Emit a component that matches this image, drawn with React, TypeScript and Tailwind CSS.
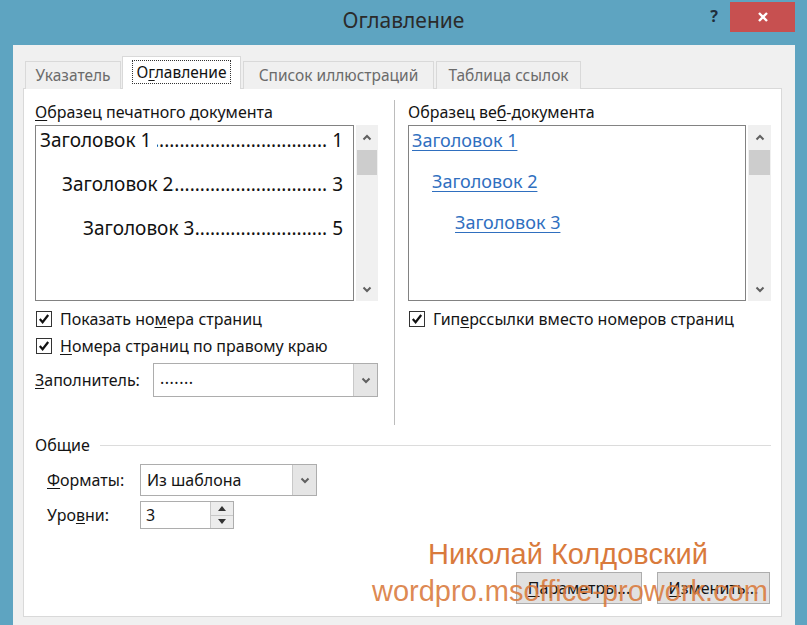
import React from 'react'

const ui = "font-['Segoe_UI','Noto_Sans',sans-serif]"

function ChevronUp() {
  return (
    <svg width="10" height="7" viewBox="0 0 10 7">
      <path d="M1.5 5.5 L5 2 L8.5 5.5" fill="none" stroke="#606060" strokeWidth="2" />
    </svg>
  )
}

function ChevronDown() {
  return (
    <svg width="10" height="7" viewBox="0 0 10 7">
      <path d="M1.5 1.5 L5 5 L8.5 1.5" fill="none" stroke="#606060" strokeWidth="2" />
    </svg>
  )
}

function Check() {
  return (
    <div className="w-[16px] h-[16px] border border-[#333] bg-white flex items-center justify-center shrink-0">
      <svg width="12" height="12" viewBox="0 0 12 12">
        <path d="M1.8 6 L4.6 9.2 L10.2 2" fill="none" stroke="#111" strokeWidth="2.2" />
      </svg>
    </div>
  )
}

function ScrollBar() {
  return (
    <div className="w-[23px] ml-[2px] bg-[#f0f0f0] flex flex-col">
      <div className="h-[25px] flex items-center justify-center">
        <ChevronUp />
      </div>
      <div className="h-[25px] mx-[1px] bg-[#cdcdcd]" />
      <div className="flex-1" />
      <div className="h-[24px] flex items-center justify-center">
        <ChevronDown />
      </div>
    </div>
  )
}

function Leader({ title, page, indent, gap }: { title: string; page: string; indent: string; gap: string }) {
  return (
    <div className={`flex items-baseline h-[44px] pt-[2px] ${indent}`}>
      <span className={`whitespace-nowrap ${gap}`}>{title}</span>
      <span className="flex-1 min-w-0 overflow-hidden flex justify-end">
        <span className="whitespace-nowrap">{'.'.repeat(60)}</span>
      </span>
      <span className="pl-[5px]">{page}</span>
    </div>
  )
}

function DropButton({ w }: { w: string }) {
  return (
    <div className={`${w} self-stretch bg-[#e5e5e5] border-l border-[#c8c8c8] flex items-center justify-center`}>
      <ChevronDown />
    </div>
  )
}

export default function App() {
  return (
    <div className={`relative w-[807px] h-[625px] bg-[#5ea4c1] flex flex-col overflow-hidden ${ui}`}>
      {/* title bar */}
      <div className="h-[45px] flex items-start shrink-0">
        <div className="flex-1" />
        <div className="pt-[6px] text-[21px] text-[#2b2b2b] leading-[28px]">Оглавление</div>
        <div className="flex-1 flex justify-end items-start">
          <div className="mt-[6px] mr-[12px] text-[16px] font-bold text-[#1f2e3c] leading-[20px]">?</div>
          <div className="mt-[2px] mr-[12px] w-[65px] h-[30px] bg-[#c75050] flex items-center justify-center">
            <svg width="12" height="12" viewBox="0 0 12 12">
              <path d="M2 2 L10 10 M10 2 L2 10" stroke="#fff" strokeWidth="2.4" />
            </svg>
          </div>
        </div>
      </div>

      {/* client */}
      <div className="ml-[13px] mr-[12px] flex-1 bg-[#f0f0f0] pt-[11px] pl-[10px] pr-[13px] flex flex-col">
        {/* tabs */}
        <div className="h-[33px] flex items-end pl-[2px] text-[15.5px] relative z-10 -mb-px">
          <div className="w-[96px] h-[28px] mr-px border border-b-0 border-[#d9d9d9] bg-[#f0f0f0] text-[#6b6b6b] flex items-center justify-center">
            Указатель
          </div>
          <div className="w-[119px] h-[33px] border border-b-0 border-[#d9d9d9] bg-white text-[#111] flex items-center justify-center pb-[2px]">
            <span className="border border-dotted border-[#333] px-[4px] leading-[22px]">
              О<span className="underline underline-offset-2">г</span>лавление
            </span>
          </div>
          <div className="w-[191px] h-[28px] ml-[2px] mr-px border border-b-0 border-[#d9d9d9] bg-[#f0f0f0] text-[#6b6b6b] flex items-center justify-center">
            Список иллюстраций
          </div>
          <div className="w-[145px] h-[28px] ml-px border border-b-0 border-[#d9d9d9] bg-[#f0f0f0] text-[#6b6b6b] flex items-center justify-center">
            Таблица ссылок
          </div>
        </div>

        {/* panel */}
        <div className="h-[529px] bg-white border border-[#d9d9d9] flex flex-col text-[16px] text-[#141414]">
          <div className="h-[336px] flex pl-[11px] pr-[10px] pt-[14px]">
            {/* left column */}
            <div className="w-[343px] shrink-0 flex flex-col">
              <div className="h-[18px] leading-[18px] mb-[4px] whitespace-nowrap">
                <span className="underline underline-offset-2">О</span>бразец печатного документа
              </div>
              <div className="h-[176px] flex">
                <div className="w-[319px] border border-[#828282] pl-[4px] pr-[10px] text-[19px] leading-[24px] text-[#111]">
                  <Leader title="Заголовок 1" page="1" indent="" gap="pr-[6px]" />
                  <Leader title="Заголовок 2" page="3" indent="pl-[22px]" gap="" />
                  <Leader title="Заголовок 3" page="5" indent="pl-[43px]" gap="" />
                </div>
                <ScrollBar />
              </div>
              <div className="mt-[9px] h-[18px] flex items-center pl-px">
                <Check />
                <span className="ml-[8px] whitespace-nowrap">
                  Показать но<span className="underline underline-offset-2">м</span>ера страниц
                </span>
              </div>
              <div className="mt-[9px] h-[18px] flex items-center pl-px">
                <Check />
                <span className="ml-[8px] whitespace-nowrap">
                  <span className="underline underline-offset-2">Н</span>омера страниц по правому краю
                </span>
              </div>
              <div className="mt-[8px] h-[34px] flex items-center">
                <span className="w-[118px] whitespace-nowrap">
                  <span className="underline underline-offset-2">З</span>аполнитель:
                </span>
                <div className="w-[225px] h-[34px] border border-[#adadad] bg-white flex items-center">
                  <span className="flex-1 pl-[6px] pb-[4px] tracking-[0.5px]">.......</span>
                  <DropButton w="w-[24px]" />
                </div>
              </div>
            </div>

            {/* divider */}
            <div className="ml-[16px] mr-[13px] w-px shrink-0 bg-[#bcbcbc] -mt-[3px]" />

            {/* right column */}
            <div className="w-[363px] shrink-0 flex flex-col">
              <div className="h-[18px] leading-[18px] mb-[4px] whitespace-nowrap">
                Образец ве<span className="underline underline-offset-2">б</span>-документа
              </div>
              <div className="h-[176px] flex">
                <div className="w-[339px] border border-[#828282] pl-[3px] text-[18px] leading-[22px] text-[#2f6fbf]">
                  <div className="h-[41px] pt-[3px]">
                    <span className="underline underline-offset-[3px]">Заголовок 1</span>
                  </div>
                  <div className="h-[41px] pt-[3px] pl-[20px]">
                    <span className="underline underline-offset-[3px]">Заголовок 2</span>
                  </div>
                  <div className="h-[41px] pt-[3px] pl-[43px]">
                    <span className="underline underline-offset-[3px]">Заголовок 3</span>
                  </div>
                </div>
                <ScrollBar />
              </div>
              <div className="mt-[9px] h-[18px] flex items-center pl-px">
                <Check />
                <span className="ml-[8px] whitespace-nowrap">
                  Гип<span className="underline underline-offset-2">е</span>рссылки вместо номеров страниц
                </span>
              </div>
            </div>
          </div>

          {/* general */}
          <div className="mt-[10px] h-[20px] flex items-center pl-[11px] pr-[10px]">
            <span>Общие</span>
            <div className="flex-1 ml-[10px] h-px bg-[#dcdcdc]" />
          </div>
          <div className="mt-[9px] h-[32px] flex items-center pl-[23px]">
            <span className="w-[93px]">
              <span className="underline underline-offset-2">Ф</span>орматы:
            </span>
            <div className="w-[177px] h-[32px] border border-[#adadad] bg-white flex items-center">
              <span className="flex-1 pl-[6px]">Из шаблона</span>
              <DropButton w="w-[24px]" />
            </div>
          </div>
          <div className="mt-[5px] h-[28px] flex items-center pl-[23px]">
            <span className="w-[93px]">
              Уро<span className="underline underline-offset-2">в</span>ни:
            </span>
            <div className="w-[94px] h-[28px] border border-[#adadad] bg-white flex items-center">
              <span className="flex-1 pl-[5px]">3</span>
              <div className="w-[23px] self-stretch flex flex-col border-l border-[#c8c8c8] bg-[#ececec]">
                <div className="flex-1 flex items-center justify-center border-b border-[#c8c8c8]">
                  <svg width="8" height="5" viewBox="0 0 8 5">
                    <path d="M0 5 L4 0 L8 5 Z" fill="#333" />
                  </svg>
                </div>
                <div className="flex-1 flex items-center justify-center">
                  <svg width="8" height="5" viewBox="0 0 8 5">
                    <path d="M0 0 L4 5 L8 0 Z" fill="#333" />
                  </svg>
                </div>
              </div>
            </div>
          </div>

          {/* buttons */}
          <div className="mt-[43px] flex justify-end pr-[11px] gap-[15px]">
            <div className="w-[126px] h-[32px] bg-[#e1e1e1] border border-[#adadad] flex items-center justify-center">
              <span>
                <span className="underline underline-offset-2">П</span>араметры...
              </span>
            </div>
            <div className="w-[113px] h-[32px] bg-[#e1e1e1] border border-[#adadad] flex items-center justify-center">
              <span>
                <span className="underline underline-offset-2">И</span>зменить...
              </span>
            </div>
          </div>
        </div>
      </div>

      {/* watermark */}
      <div className="absolute left-[428px] top-[540px] font-['Liberation_Sans',Arial,sans-serif] text-[29px] leading-none text-[#d97a3c] whitespace-nowrap pointer-events-none">
        Николай Колдовский
      </div>
      <div className="absolute left-[372px] top-[577px] font-['Liberation_Sans',Arial,sans-serif] text-[29px] leading-none text-[#d97a3c]/90 whitespace-nowrap pointer-events-none">
        wordpro.msoffice-prowork.com
      </div>
    </div>
  )
}
